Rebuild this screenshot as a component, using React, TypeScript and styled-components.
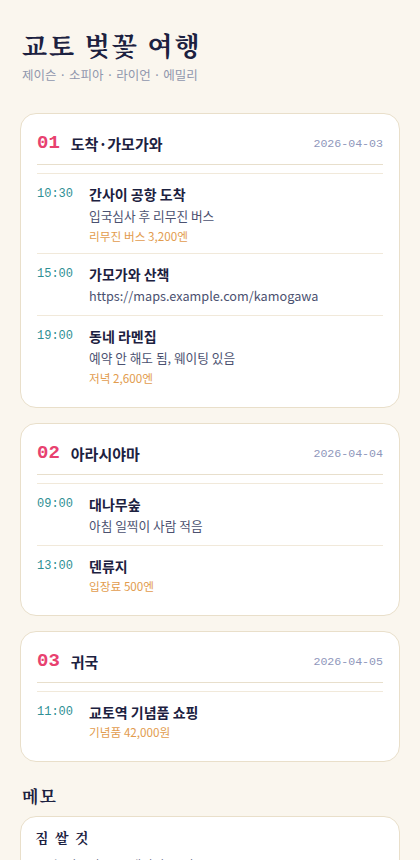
import React from "react";
import styled, { createGlobalStyle } from "styled-components";

const GlobalStyle = createGlobalStyle`
  html, body {
    margin: 0;
    padding: 0;
    background: #faf6ee;
  }
  body {
    font-family: "Noto Sans CJK KR", sans-serif;
    color: #1c2140;
  }
`;

const serif = `"Noto Serif CJK KR", "Noto Serif KR", "Liberation Serif", "Noto Sans CJK KR", serif`;

type Item = {
  time: string;
  title: string;
  desc?: string;
  cost?: string;
};

type Day = {
  num: string;
  title: string;
  date: string;
  items: Item[];
};

const days: Day[] = [
  {
    num: "01",
    title: "도착·가모가와",
    date: "2026-04-03",
    items: [
      { time: "10:30", title: "간사이 공항 도착", desc: "입국심사 후 리무진 버스", cost: "리무진 버스 3,200엔" },
      { time: "15:00", title: "가모가와 산책", desc: "https://maps.example.com/kamogawa" },
      { time: "19:00", title: "동네 라멘집", desc: "예약 안 해도 됨, 웨이팅 있음", cost: "저녁 2,600엔" },
    ],
  },
  {
    num: "02",
    title: "아라시야마",
    date: "2026-04-04",
    items: [
      { time: "09:00", title: "대나무숲", desc: "아침 일찍이 사람 적음" },
      { time: "13:00", title: "덴류지", cost: "입장료 500엔" },
    ],
  },
  {
    num: "03",
    title: "귀국",
    date: "2026-04-05",
    items: [{ time: "11:00", title: "교토역 기념품 쇼핑", cost: "기념품 42,000원" }],
  },
];

const App = () => {
  return (
    <Page>
      <GlobalStyle />
      <Header>
        <Title>교토 벚꽃 여행</Title>
        <Members>제이슨 · 소피아 · 라이언 · 에밀리</Members>
      </Header>

      <DayList>
        {days.map((day) => (
          <Card key={day.num}>
            <DayHead>
              <DayNum>{day.num}</DayNum>
              <DayTitle>{day.title}</DayTitle>
              <DayDate>{day.date}</DayDate>
            </DayHead>
            <Items>
              {day.items.map((item) => (
                <Row key={item.time}>
                  <Time>{item.time}</Time>
                  <Body>
                    <ItemTitle>{item.title}</ItemTitle>
                    {item.desc && <Desc>{item.desc}</Desc>}
                    {item.cost && <Cost>{item.cost}</Cost>}
                  </Body>
                </Row>
              ))}
            </Items>
          </Card>
        ))}
      </DayList>

      <SectionTitle>메모</SectionTitle>
      <MemoCard>
        <MemoTitle>짐 쌀 것</MemoTitle>
        <MemoText>모자, 선크림, 보조배터리, 우산</MemoText>
      </MemoCard>
    </Page>
  );
};

const Page = styled.div`
  padding: 26px 20px 40px;
`;

const Header = styled.header`
  padding: 0 2px;
  margin-bottom: 29px;
`;

const Title = styled.h1`
  margin: 0;
  font-family: ${serif};
  font-size: 26px;
  font-weight: 700;
  letter-spacing: 2px;
  line-height: 38px;
  color: #1c2140;
`;

const Members = styled.div`
  margin-top: 2px;
  font-size: 12.5px;
  line-height: 18px;
  color: #9096ad;
`;

const DayList = styled.div`
  display: flex;
  flex-direction: column;
  gap: 15px;
`;

const Card = styled.section`
  background: #ffffff;
  border: 1px solid #e9dfca;
  border-radius: 16px;
  padding: 17px 16px 12px;
`;

const DayHead = styled.div`
  display: flex;
  align-items: center;
  height: 24px;
  padding-bottom: 9px;
  border-bottom: 1.5px solid #e8dfcc;
  margin-bottom: 8px;
`;

const DayNum = styled.span`
  font-family: "Liberation Mono", monospace;
  font-size: 19px;
  font-weight: 700;
  color: #e8416f;
  margin-right: 11px;
`;

const DayTitle = styled.span`
  font-size: 15px;
  font-weight: 700;
  color: #1c2140;
  flex: 1;
`;

const DayDate = styled.span`
  font-family: "Liberation Mono", monospace;
  font-size: 11.6px;
  color: #8f97bb;
`;

const Items = styled.div`
  display: flex;
  flex-direction: column;
`;

const Row = styled.div`
  display: flex;
  padding: 9px 0 8px;
  border-top: 1px solid #f1e9da;
`;

const Time = styled.div`
  width: 52px;
  flex: none;
  font-family: "Liberation Mono", monospace;
  font-size: 12px;
  line-height: 22px;
  color: #2f8f94;
`;

const Body = styled.div`
  display: flex;
  flex-direction: column;
`;

const ItemTitle = styled.div`
  font-size: 14px;
  font-weight: 700;
  line-height: 22px;
  color: #1c2140;
`;

const Desc = styled.div`
  font-size: 12.7px;
  line-height: 22px;
  color: #4b5170;
`;

const Cost = styled.div`
  font-size: 11.7px;
  line-height: 18px;
  color: #e29c4e;
`;

const SectionTitle = styled.h2`
  margin: 22px 2px 8px;
  font-family: ${serif};
  font-size: 17px;
  font-weight: 700;
  letter-spacing: 1px;
  line-height: 24px;
  color: #1c2140;
`;

const MemoCard = styled.section`
  background: #ffffff;
  border: 1px solid #e9dfca;
  border-radius: 16px;
  padding: 9px 14px 14px;
`;

const MemoTitle = styled.div`
  font-family: ${serif};
  font-size: 14px;
  font-weight: 700;
  letter-spacing: 1.5px;
  line-height: 22px;
`;

const MemoText = styled.div`
  margin-top: 6px;
  font-size: 12.7px;
  line-height: 22px;
  color: #4b5170;
`;

export default App;
